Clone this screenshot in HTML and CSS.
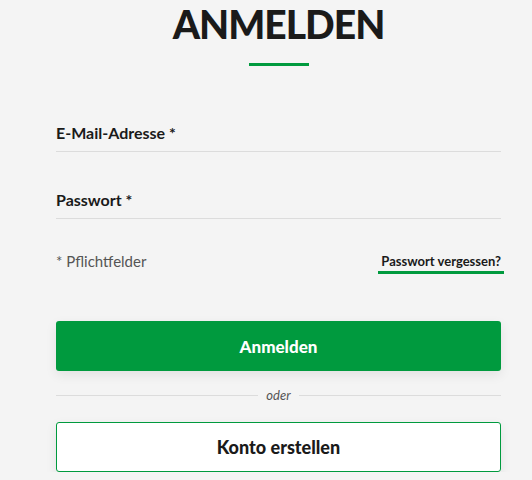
FILE: index.html
```html
<!DOCTYPE html>
<html lang="de">
<head>
    <meta charset="UTF-8">
    <meta name="viewport" content="width=device-width, initial-scale=1.0">
    <title>Anmelden</title>
    <link rel="stylesheet" href="styles.css">
</head>
<body>
    <div class="login">
        <h1 class="title">ANMELDEN</h1>
        <div class="title-bar"></div>

        <form class="form" onsubmit="return false;">
            <label class="field">
                <span class="field-label">E-Mail-Adresse *</span>
                <input type="email" class="field-input">
            </label>
            <label class="field">
                <span class="field-label">Passwort *</span>
                <input type="password" class="field-input">
            </label>

            <div class="meta">
                <span class="required">* Pflichtfelder</span>
                <a href="#" class="forgot">Passwort vergessen?</a>
            </div>

            <button class="btn btn-primary">Anmelden</button>

            <div class="divider"><span>oder</span></div>

            <button class="btn btn-outline">Konto erstellen</button>
        </form>
    </div>
</body>
</html>
```

FILE: styles.css
```css
body {
    margin: 0;
    background-color: #f4f4f4;
    font-family: Lato, "Liberation Sans", sans-serif;
    color: #1a1a1a;
}
.login {
    margin-left: 56px;
    width: 445px;
}
.title {
    margin: 0;
    padding-top: 2px;
    text-align: center;
    font-size: 39px;
    font-weight: 900;
    letter-spacing: -1px;
    line-height: 44px;
    color: #1a1a1a;
}
.title-bar {
    width: 60px;
    height: 3px;
    margin: 17px auto 0;
    background: #009a3e;
}
.form {
    margin-top: 57px;
}
.field {
    display: block;
    border-bottom: 1px solid #dcdcdc;
    margin-bottom: 38px;
}
.field-label {
    display: block;
    font-size: 16px;
    font-weight: 700;
    line-height: 20px;
    padding-bottom: 8px;
}
.field-input {
    display: none;
}
.meta {
    display: flex;
    justify-content: space-between;
    align-items: flex-start;
    margin-top: -6px;
}
.required {
    font-size: 15px;
    color: #555;
    line-height: 20px;
}
.forgot {
    font-size: 13px;
    font-weight: 700;
    color: #1a1a1a;
    text-decoration: none;
    line-height: 16px;
    padding: 0 3px 2px;
    margin-right: -3px;
    margin-top: 2px;
    border-bottom: 3px solid #009a3e;
}
.btn {
    display: block;
    width: 100%;
    height: 50px;
    font-family: Lato, "Liberation Sans", sans-serif;
    font-size: 18px;
    font-weight: 900;
    border-radius: 3px;
    cursor: pointer;
    box-shadow: 0 4px 12px rgba(0,0,0,0.08);
}
.btn-primary {
    margin-top: 47px;
    background: #009a3e;
    color: white;
    border: none;
    font-size: 17px;
}
.btn-outline {
    background: white;
    color: #1a1a1a;
    border: 1px solid #009a3e;
}
.divider {
    display: flex;
    align-items: center;
    gap: 8px;
    margin: 16px 0 19px;
    font-size: 13px;
    font-style: italic;
    color: #555;
}
.divider::before,
.divider::after {
    content: "";
    flex: 1;
    height: 1px;
    background: #dcdcdc;
}
```
